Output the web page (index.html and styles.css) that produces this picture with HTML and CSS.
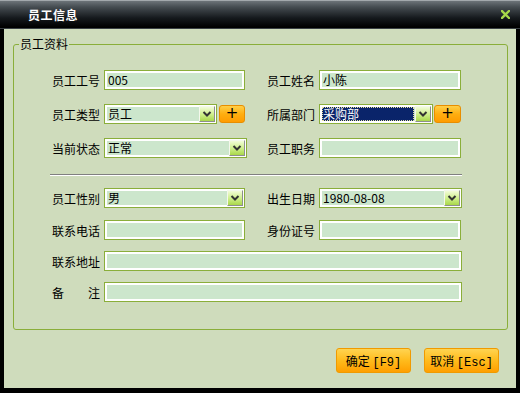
FILE: index.html
```html
<!DOCTYPE html>
<html lang="zh-CN">
<head>
    <meta charset="UTF-8">
    <title>员工信息</title>
    <link rel="stylesheet" href="styles.css">
</head>
<body>
    <div class="window">
        <div class="titlebar">
            <span class="title">员工信息</span>
            <svg class="close" width="9" height="9" viewBox="0 0 9 9">
                <path d="M1 1 L8 8 M8 1 L1 8" stroke="#a6d84a" stroke-width="2.4" stroke-linecap="square"/>
            </svg>
        </div>
        <div class="client">
            <fieldset class="group">
                <legend>员工资料</legend>
                <div class="group-body">
                    <div class="row">
                        <div class="half left">
                            <label>员工工号</label>
                            <div class="field w-left">005</div>
                        </div>
                        <div class="half">
                            <label>员工姓名</label>
                            <div class="field w-right">小陈</div>
                        </div>
                    </div>

                    <div class="row spaced">
                        <div class="half left">
                            <label>员工类型</label>
                            <div class="combo w-type">
                                <span class="value">员工</span>
                                <span class="drop"><svg width="10" height="6" viewBox="0 0 10 6"><path d="M1.5 1 L5 4.5 L8.5 1" fill="none" stroke="#333" stroke-width="2"/></svg></span>
                            </div>
                            <button class="add">+</button>
                        </div>
                        <div class="half">
                            <label>所属部门</label>
                            <div class="combo w-dept">
                                <span class="value selected">采购部</span>
                                <span class="drop"><svg width="10" height="6" viewBox="0 0 10 6"><path d="M1.5 1 L5 4.5 L8.5 1" fill="none" stroke="#333" stroke-width="2"/></svg></span>
                            </div>
                            <button class="add add-wide">+</button>
                        </div>
                    </div>

                    <div class="row spaced">
                        <div class="half left">
                            <label>当前状态</label>
                            <div class="combo w-state">
                                <span class="value">正常</span>
                                <span class="drop"><svg width="10" height="6" viewBox="0 0 10 6"><path d="M1.5 1 L5 4.5 L8.5 1" fill="none" stroke="#333" stroke-width="2"/></svg></span>
                            </div>
                        </div>
                        <div class="half">
                            <label>员工职务</label>
                            <div class="field w-right"></div>
                        </div>
                    </div>

                    <div class="divider"></div>

                    <div class="row">
                        <div class="half left">
                            <label>员工性别</label>
                            <div class="combo w-left">
                                <span class="value">男</span>
                                <span class="drop"><svg width="10" height="6" viewBox="0 0 10 6"><path d="M1.5 1 L5 4.5 L8.5 1" fill="none" stroke="#333" stroke-width="2"/></svg></span>
                            </div>
                        </div>
                        <div class="half">
                            <label>出生日期</label>
                            <div class="combo w-date">
                                <span class="value">1980-08-08</span>
                                <span class="drop"><svg width="10" height="6" viewBox="0 0 10 6"><path d="M1.5 1 L5 4.5 L8.5 1" fill="none" stroke="#333" stroke-width="2"/></svg></span>
                            </div>
                        </div>
                    </div>

                    <div class="row">
                        <div class="half left">
                            <label>联系电话</label>
                            <div class="field w-left"></div>
                        </div>
                        <div class="half">
                            <label>身份证号</label>
                            <div class="field w-right"></div>
                        </div>
                    </div>

                    <div class="row tight">
                        <label>联系地址</label>
                        <div class="field w-wide"></div>
                    </div>

                    <div class="row tight">
                        <label>备注</label>
                        <div class="field w-wide"></div>
                    </div>
                </div>
            </fieldset>

            <div class="actions">
                <button class="btn">确定 <span class="key">[F9]</span></button>
                <button class="btn">取消 <span class="key">[Esc]</span></button>
            </div>
        </div>
    </div>
</body>
</html>
```

FILE: styles.css
```css
body {
    margin: 0;
    font-family: "Noto Sans CJK SC", "DejaVu Sans", sans-serif;
    font-size: 12px;
    color: #000;
}
.window {
    width: 520px;
    height: 393px;
    background: #000;
    display: flex;
    flex-direction: column;
}
.titlebar {
    height: 29px;
    box-sizing: border-box;
    display: flex;
    align-items: center;
    justify-content: space-between;
    padding: 0 10px 0 28px;
    background: linear-gradient(#a2a8ac 0, #a2a8ac 1px, #6c7378 1px, #454c51 7px, #15191d 18px, #000 27px, #000 28px, #3a4044 28px);
}
.title {
    color: #fff;
    font-weight: bold;
    letter-spacing: 0.5px;
}
.close {
    display: block;
}
.client {
    flex: 1;
    margin: 0 4px 5px;
    background: #cfdcbc;
    display: flex;
    flex-direction: column;
}
.group {
    margin: 8px 8px 0 9px;
    padding: 0;
    border: 1px solid #8aae3a;
    border-radius: 3px;
    min-width: 0;
}
.group legend {
    margin-left: 5px;
    padding: 0 1px;
    line-height: 14px;
}
.group-body {
    padding: 19px 0 27px 38px;
}
.row {
    display: flex;
    align-items: center;
    height: 20px;
    margin-top: 12px;
    gap: 4px;
}
.row:first-child {
    margin-top: 0;
}
.row.spaced {
    margin-top: 14px;
}
.row.tight {
    margin-top: 11px;
}
.half {
    display: flex;
    align-items: center;
    gap: 4px;
}
.half.left {
    width: 211px;
    flex-shrink: 0;
}
.row label {
    width: 48px;
    flex-shrink: 0;
    white-space: nowrap;
    text-align: justify;
    text-align-last: justify;
}
.field, .combo {
    box-sizing: border-box;
    height: 20px;
    border: 1px solid #8aae3a;
    box-shadow: inset 0 0 0 2px #fff;
    background: #cce6cc;
    line-height: 18px;
    padding-left: 3px;
    white-space: nowrap;
}
.combo {
    display: flex;
    align-items: center;
    padding: 1px 1px 1px 2px;
}
.combo .value {
    flex: 1;
    padding-left: 1px;
    line-height: 14px;
}
.combo .value.selected {
    background: #0a246a;
    color: #fff;
    outline: 1px dotted #e8e0a0;
    outline-offset: -1px;
    margin-right: 1px;
}
.drop {
    box-sizing: border-box;
    width: 16px;
    height: 16px;
    display: flex;
    align-items: center;
    justify-content: center;
    background: linear-gradient(#f2fcd8, #cdee88 55%, #a9d84a);
    border: 1px solid;
    border-color: #f4f8ec #8e8e8e #8e8e8e #f4f8ec;
}
.drop svg {
    display: block;
}
.add {
    box-sizing: border-box;
    width: 26px;
    height: 18px;
    margin-left: -2px;
    padding: 0 0 3px;
    border: 1px solid #e88e00;
    border-radius: 3px;
    background: linear-gradient(#ffcf48, #ffae10 50%, #ff9c00);
    font: 15px "DejaVu Sans", sans-serif;
    line-height: 12px;
    color: #000;
}
.add-wide {
    width: 27px;
    margin-left: -3px;
}
.w-left { width: 141px; }
.w-right { width: 142px; }
.w-type { width: 113px; }
.w-dept { width: 114px; }
.w-state { width: 143px; }
.w-date { width: 143px; }
.w-wide { width: 358px; }
.divider {
    width: 412px;
    margin: 16px 0 0 -2px;
    border-top: 1px solid #808080;
    border-bottom: 1px solid #fff;
}
.actions {
    display: flex;
    justify-content: flex-end;
    gap: 13px;
    margin: 18px 17px 0 0;
}
.btn {
    box-sizing: border-box;
    width: 75px;
    height: 25px;
    padding: 0;
    border: 1px solid #f09a00;
    border-radius: 3px;
    background: linear-gradient(#ffd451, #ffbb1c 50%, #ff9f00);
    font: inherit;
    color: #000;
    cursor: pointer;
}
.key {
    font-family: "Liberation Mono", monospace;
}
```
